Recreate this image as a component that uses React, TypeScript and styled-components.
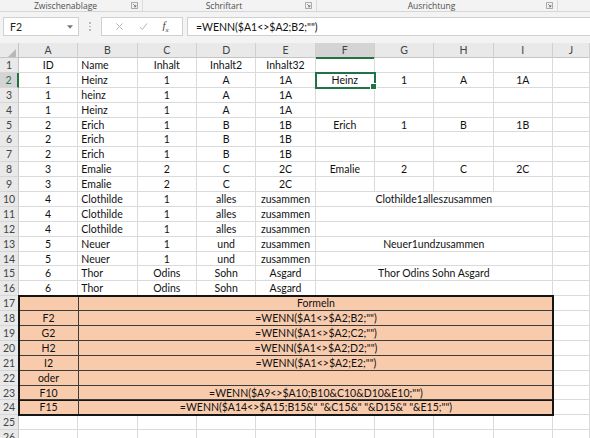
import React from 'react'
import styled, { createGlobalStyle, css } from 'styled-components'

const COLS = '19px repeat(9, 59.33px) 1fr'
const ROW_H = '14.9px'
const GREEN = '#217346'

type Align = 'left' | 'center' | 'right'
type CellData = { v: string; a?: Align; span?: number }

const L = (v: string): CellData => ({ v, a: 'left' })
const C = (v: string): CellData => ({ v, a: 'center' })
const M = (v: string): CellData => ({ v, a: 'center', span: 4 })
const E: CellData = { v: '' }

const dataRows: CellData[][] = [
  [C('ID'), L('Name'), C('Inhalt'), C('Inhalt2'), C('Inhalt32'), E, E, E, E, E],
  [C('1'), L('Heinz'), C('1'), C('A'), C('1A'), C('Heinz'), C('1'), C('A'), C('1A'), E],
  [C('1'), L('heinz'), C('1'), C('A'), C('1A'), E, E, E, E, E],
  [C('1'), L('Heinz'), C('1'), C('A'), C('1A'), E, E, E, E, E],
  [C('2'), L('Erich'), C('1'), C('B'), C('1B'), C('Erich'), C('1'), C('B'), C('1B'), E],
  [C('2'), L('Erich'), C('1'), C('B'), C('1B'), E, E, E, E, E],
  [C('2'), L('Erich'), C('1'), C('B'), C('1B'), E, E, E, E, E],
  [C('3'), L('Emalie'), C('2'), C('C'), C('2C'), C('Emalie'), C('2'), C('C'), C('2C'), E],
  [C('3'), L('Emalie'), C('2'), C('C'), C('2C'), E, E, E, E, E],
  [C('4'), L('Clothilde'), C('1'), C('alles'), C('zusammen'), M('Clothilde1alleszusammen'), E],
  [C('4'), L('Clothilde'), C('1'), C('alles'), C('zusammen'), M(''), E],
  [C('4'), L('Clothilde'), C('1'), C('alles'), C('zusammen'), M(''), E],
  [C('5'), L('Neuer'), C('1'), C('und'), C('zusammen'), M('Neuer1undzusammen'), E],
  [C('5'), L('Neuer'), C('1'), C('und'), C('zusammen'), M(''), E],
  [C('6'), L('Thor'), C('Odins'), C('Sohn'), C('Asgard'), M('Thor Odins Sohn Asgard'), E],
  [C('6'), L('Thor'), C('Odins'), C('Sohn'), C('Asgard'), M(''), E],
]

const formulaRows: [string, string][] = [
  ['', 'Formeln'],
  ['F2', '=WENN($A1<>$A2;B2;"")'],
  ['G2', '=WENN($A1<>$A2;C2;"")'],
  ['H2', '=WENN($A1<>$A2;D2;"")'],
  ['I2', '=WENN($A1<>$A2;E2;"")'],
  ['oder', ''],
  ['F10', '=WENN($A9<>$A10;B10&C10&D10&E10;"")'],
  ['F15', '=WENN($A14<>$A15;B15&" "&C15&" "&D15&" "&E15;"")'],
]

const columns = ['A', 'B', 'C', 'D', 'E', 'F', 'G', 'H', 'I', 'J']

const ribbonGroups = [
  { label: 'Zwischenablage', w: 143 },
  { label: 'Schriftart', w: 174 },
  { label: 'Ausrichtung', w: 241 },
]

export default function App() {
  return (
    <>
      <GlobalStyle />
      <Window>
        <RibbonBar>
          {ribbonGroups.map((g) => (
            <RibbonGroup key={g.label} $w={g.w}>
              <GroupLabel>{g.label}</GroupLabel>
              <Launcher viewBox="0 0 8 8">
                <path d="M0.5 0.5h7v7h-7z" fill="none" stroke="#9a9a9a" />
                <path d="M2.5 2.5l3 3M5.5 3.3v2.2h-2.2" fill="none" stroke="#707070" />
              </Launcher>
            </RibbonGroup>
          ))}
        </RibbonBar>

        <FormulaArea>
          <NameBox>
            <span>F2</span>
            <Caret viewBox="0 0 7 4">
              <path d="M0 0h7L3.5 4z" fill="#777" />
            </Caret>
          </NameBox>
          <Dots>
            <i />
            <i />
            <i />
          </Dots>
          <FxBox>
            <ToolIcon viewBox="0 0 10 10">
              <path d="M1.5 1.5l7 7M8.5 1.5l-7 7" stroke="#b4b4b4" strokeWidth="1.1" />
            </ToolIcon>
            <ToolIcon viewBox="0 0 10 10">
              <path d="M1 5.5l2.6 2.8L9 1.6" fill="none" stroke="#b4b4b4" strokeWidth="1.1" />
            </ToolIcon>
            <FxLabel>
              f<sub>x</sub>
            </FxLabel>
          </FxBox>
          <FormulaInput>=WENN($A1&lt;&gt;$A2;B2;"")</FormulaInput>
        </FormulaArea>

        <Sheet>
          <HeaderRow>
            <Corner />
            {columns.map((c) => (
              <ColHeader key={c} $active={c === 'F'}>
                {c}
              </ColHeader>
            ))}
          </HeaderRow>

          {dataRows.map((row, i) => (
            <GridRow key={i}>
              <RowHead $active={i === 1}>{i + 1}</RowHead>
              {row.map((cell, j) => (
                <Cell
                  key={j}
                  $align={cell.a ?? 'left'}
                  $span={cell.span ?? 1}
                  $selected={i === 1 && j === 5}
                >
                  {cell.v}
                </Cell>
              ))}
            </GridRow>
          ))}

          <BlockArea>
            <HeadStack>
              {formulaRows.map((_, i) => (
                <RowHead key={i}>{17 + i}</RowHead>
              ))}
            </HeadStack>
            <FormulaTable>
              {formulaRows.map(([label, formula], i) => (
                <React.Fragment key={i}>
                  <BlockLabel $thickTop={i === 7} $last={i === 7}>
                    {label}
                  </BlockLabel>
                  <BlockFormula $thickTop={i === 7} $last={i === 7}>
                    {formula}
                  </BlockFormula>
                </React.Fragment>
              ))}
            </FormulaTable>
            <HeadStack>
              {formulaRows.map((_, i) => (
                <Cell key={i} $align="left" $span={1} />
              ))}
            </HeadStack>
          </BlockArea>

          {[25, 26].map((n) => (
            <GridRow key={n}>
              <RowHead>{n}</RowHead>
              {columns.map((c) => (
                <Cell key={c} $align="left" $span={1} />
              ))}
            </GridRow>
          ))}
        </Sheet>
      </Window>
    </>
  )
}

const GlobalStyle = createGlobalStyle`
  * { box-sizing: border-box; }
  body {
    margin: 0;
    background: #ffffff;
    font-family: Lato, 'Open Sans', sans-serif;
  }
`

const Window = styled.div`
  width: 590px;
  height: 438px;
  overflow: hidden;
  background: #f3f3f3;
`

const RibbonBar = styled.div`
  display: flex;
  height: 12px;
  background: #f3f3f3;
  border-bottom: 1px solid #d6d6d6;
  overflow: hidden;
`

const RibbonGroup = styled.div<{ $w: number }>`
  width: ${(p) => p.$w}px;
  flex-shrink: 0;
  display: flex;
  align-items: center;
  border-right: 1px solid #dcdcdc;
`

const GroupLabel = styled.span`
  flex: 1;
  text-align: center;
  font-family: 'Open Sans', sans-serif;
  font-size: 8.5px;
  line-height: 11px;
  color: #505050;
`

const Launcher = styled.svg`
  width: 7px;
  height: 7px;
  margin: 0 4px 0 0;
`

const FormulaArea = styled.div`
  display: flex;
  align-items: center;
  height: 31px;
  padding: 0 0 2px 3px;
  background: #f3f3f3;
`

const boxBase = css`
  height: 19px;
  background: #ffffff;
  border: 1px solid #d0d0d0;
  display: flex;
  align-items: center;
`

const NameBox = styled.div`
  ${boxBase};
  width: 76px;
  justify-content: space-between;
  padding: 0 5px 0 6px;
  font-size: 10.5px;
  color: #222;
`

const Caret = styled.svg`
  width: 6px;
  height: 4px;
`

const Dots = styled.div`
  width: 22px;
  display: flex;
  flex-direction: column;
  align-items: center;
  gap: 2px;

  i {
    width: 1.5px;
    height: 1.5px;
    background: #b0b0b0;
    border-radius: 50%;
  }
`

const FxBox = styled.div`
  ${boxBase};
  width: 82px;
  justify-content: space-around;
  padding: 0 6px;
`

const ToolIcon = styled.svg`
  width: 9px;
  height: 9px;
`

const FxLabel = styled.span`
  font-family: 'Liberation Serif', serif;
  font-style: italic;
  font-size: 11px;
  color: #444;

  sub {
    font-size: 7px;
  }
`

const FormulaInput = styled.div`
  ${boxBase};
  flex: 1;
  margin-left: 4px;
  padding-left: 8px;
  border-right: none;
  font-size: 10.5px;
  color: #111;
  white-space: nowrap;
`

const Sheet = styled.div`
  background: #ffffff;
  font-size: 10.5px;
  color: #111;
`

const HeaderRow = styled.div`
  display: grid;
  grid-template-columns: ${COLS};
  height: 15px;
  background: #e9e9e9;
  border-bottom: 1px solid #c4c4c4;
`

const Corner = styled.div`
  position: relative;
  border-right: 1px solid #c4c4c4;

  &::after {
    content: '';
    position: absolute;
    right: 2px;
    bottom: 2px;
    border-left: 8px solid transparent;
    border-bottom: 8px solid #b8b8b8;
  }
`

const ColHeader = styled.div<{ $active?: boolean }>`
  text-align: center;
  line-height: 14px;
  color: #444;
  border-right: 1px solid #d0d0d0;
  ${(p) =>
    p.$active &&
    css`
      background: #d4d4d4;
      border-bottom: 2px solid ${GREEN};
    `}
`

const GridRow = styled.div`
  display: grid;
  grid-template-columns: ${COLS};
  height: ${ROW_H};
`

const RowHead = styled.div<{ $active?: boolean }>`
  height: ${ROW_H};
  text-align: center;
  line-height: 14px;
  color: #444;
  background: #e9e9e9;
  border-right: 1px solid #c4c4c4;
  border-bottom: 1px solid #d6d6d6;
  ${(p) =>
    p.$active &&
    css`
      color: ${GREEN};
      background: #d4d4d4;
      border-right: 2px solid ${GREEN};
    `}
`

const Cell = styled.div<{ $align: Align; $span: number; $selected?: boolean }>`
  position: relative;
  grid-column: span ${(p) => p.$span};
  height: ${ROW_H};
  padding: 0 3px;
  text-align: ${(p) => p.$align};
  line-height: 14px;
  white-space: nowrap;
  border-right: 1px solid #dadada;
  border-bottom: 1px solid #dadada;
  ${(p) =>
    p.$selected &&
    css`
      outline: 2px solid ${GREEN};
      outline-offset: -1px;
      z-index: 1;

      &::after {
        content: '';
        position: absolute;
        right: -3px;
        bottom: -3px;
        width: 5px;
        height: 5px;
        background: ${GREEN};
        border: 1px solid #ffffff;
      }
    `}
`

const BlockArea = styled.div`
  display: grid;
  grid-template-columns: 19px 534px 1fr;
`

const HeadStack = styled.div`
  display: flex;
  flex-direction: column;
`

const FormulaTable = styled.div`
  display: grid;
  grid-template-columns: 60px 1fr;
  background: #f8cbad;
  outline: 2px solid #151515;
  outline-offset: -1px;
  position: relative;
  z-index: 1;
`

const blockCell = css<{ $thickTop?: boolean; $last?: boolean }>`
  height: ${ROW_H};
  line-height: 14px;
  text-align: center;
  white-space: nowrap;
  border-bottom: ${(p) => (p.$last ? 'none' : '1px solid #3c3c3c')};
  ${(p) =>
    p.$thickTop &&
    css`
      border-top: 1px solid #151515;
      line-height: 12px;
    `}
`

const BlockLabel = styled.div<{ $thickTop?: boolean; $last?: boolean }>`
  ${blockCell};
  border-right: 1px solid #3c3c3c;
`

const BlockFormula = styled.div<{ $thickTop?: boolean; $last?: boolean }>`
  ${blockCell};
`
